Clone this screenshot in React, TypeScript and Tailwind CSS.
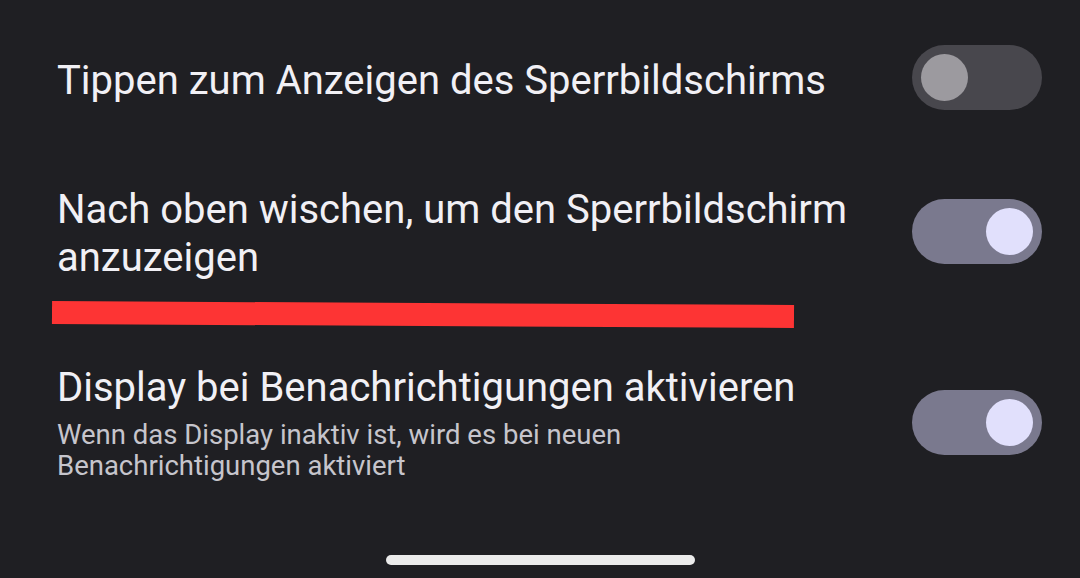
import React from 'react';

function Toggle({ on }: { on: boolean }) {
  return (
    <div
      className={`flex h-[65px] w-[130px] shrink-0 items-center rounded-full px-[9px] ${
        on ? 'justify-end bg-[#7a798e]' : 'justify-start bg-[#48474d]'
      }`}
    >
      <div className={`h-[47px] w-[47px] rounded-full ${on ? 'bg-[#e1e0fc]' : 'bg-[#9c9a9f]'}`} />
    </div>
  );
}

export default function App() {
  return (
    <div
      className="flex h-[578px] w-[1080px] flex-col overflow-hidden bg-[#1f1f23] text-[#f1f0f5]"
      style={{ fontFamily: 'Roboto, "Noto Sans", sans-serif' }}
    >
      {/* Row 1 */}
      <div className="flex items-center justify-between pl-[57px] pr-[38px] pt-[45px]">
        <div className="pt-[6px] text-[40px] leading-[48px]">Tippen zum Anzeigen des Sperrbildschirms</div>
        <Toggle on={false} />
      </div>

      {/* Row 2 */}
      <div className="flex items-center justify-between pl-[57px] pr-[38px] pt-[70px]">
        <div className="pt-[6px] text-[40px] leading-[48px]">
          Nach oben wischen, um den Sperrbildschirm
          <br />
          anzuzeigen
        </div>
        <Toggle on={true} />
      </div>

      {/* red marker */}
      <div className="ml-[52px] mt-[21px] h-[23px] w-[742px] rotate-[0.3deg] bg-[#fd3434]" />

      {/* Row 3 */}
      <div className="flex items-center justify-between pl-[57px] pr-[38px] pt-[38px]">
        <div>
          <div className="text-[40px] leading-[48px]">Display bei Benachrichtigungen aktivieren</div>
          <div className="mt-[7px] text-[27.5px] leading-[31px] text-[#c6c5cc]">
            Wenn das Display inaktiv ist, wird es bei neuen
            <br />
            Benachrichtigungen aktiviert
          </div>
        </div>
        <Toggle on={true} />
      </div>

      <div className="flex-1" />
      {/* home indicator */}
      <div className="mx-auto mb-[13px] h-[10px] w-[309px] rounded-full bg-[#ebebeb]" />
    </div>
  );
}
